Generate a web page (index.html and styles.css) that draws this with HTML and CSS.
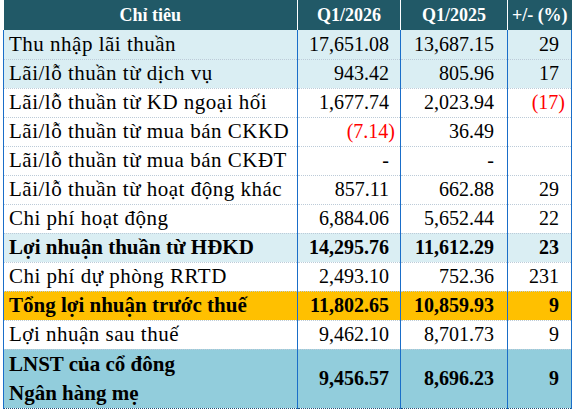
FILE: index.html
```html
<!DOCTYPE html>
<html lang="vi">

<head>
    <meta charset="UTF-8">
    <meta name="viewport" content="width=device-width, initial-scale=1.0">
    <title>Kết quả kinh doanh Q1/2026</title>
    <link rel="stylesheet" href="styles.css">
</head>

<body>
    <table class="kq">
        <thead>
            <tr>
                <th class="ten">Chỉ tiêu</th>
                <th>Q1/2026</th>
                <th>Q1/2025</th>
                <th class="pt">+/- (%)</th>
            </tr>
        </thead>
        <tbody>
            <tr class="xanh">
                <td>Thu nhập lãi thuần</td>
                <td>17,651.08</td>
                <td>13,687.15</td>
                <td>29</td>
            </tr>
            <tr class="xanh">
                <td>Lãi/lỗ thuần từ dịch vụ</td>
                <td>943.42</td>
                <td>805.96</td>
                <td>17</td>
            </tr>
            <tr>
                <td>Lãi/lỗ thuần từ KD ngoại hối</td>
                <td>1,677.74</td>
                <td>2,023.94</td>
                <td><span class="am">(17)</span></td>
            </tr>
            <tr>
                <td>Lãi/lỗ thuần từ mua bán CKKD</td>
                <td><span class="am">(7.14)</span></td>
                <td>36.49</td>
                <td></td>
            </tr>
            <tr>
                <td>Lãi/lỗ thuần từ mua bán CKĐT</td>
                <td class="gach">-</td>
                <td class="gach">-</td>
                <td></td>
            </tr>
            <tr>
                <td>Lãi/lỗ thuần từ hoạt động khác</td>
                <td>857.11</td>
                <td>662.88</td>
                <td>29</td>
            </tr>
            <tr>
                <td>Chi phí hoạt động</td>
                <td>6,884.06</td>
                <td>5,652.44</td>
                <td>22</td>
            </tr>
            <tr class="xanh dam">
                <td>Lợi nhuận thuần từ HĐKD</td>
                <td>14,295.76</td>
                <td>11,612.29</td>
                <td>23</td>
            </tr>
            <tr>
                <td>Chi phí dự phòng RRTD</td>
                <td>2,493.10</td>
                <td>752.36</td>
                <td>231</td>
            </tr>
            <tr class="cam dam">
                <td>Tổng lợi nhuận trước thuế</td>
                <td>11,802.65</td>
                <td>10,859.93</td>
                <td>9</td>
            </tr>
            <tr>
                <td>Lợi nhuận sau thuế</td>
                <td>9,462.10</td>
                <td>8,701.73</td>
                <td>9</td>
            </tr>
            <tr class="dam cuoi">
                <td>LNST của cổ đông<br>Ngân hàng mẹ</td>
                <td>9,456.57</td>
                <td>8,696.23</td>
                <td>9</td>
            </tr>
        </tbody>
    </table>
</body>

</html>
```
FILE: styles.css
```css
* {
    margin: 0;
    padding: 0;
    box-sizing: border-box;
}

body {
    background: #fff;
    padding: 0 2px 0 3px;
    font-family: "Liberation Serif", "Times New Roman", serif;
    color: #000;
}

.kq {
    border-collapse: collapse;
    width: 568px;
    table-layout: fixed;
}

.kq th {
    background: #215967;
    color: #fff;
    font-size: 18px;
    font-weight: bold;
    height: 30px;
    text-align: center;
    border-left: 1px solid #fff;
    padding-top: 1px;
}

.kq th.ten {
    width: 294px;
    border-left: none;
}

.kq th:nth-child(2) {
    width: 103px;
}

.kq th:nth-child(3) {
    width: 107px;
}

.kq th.pt {
    width: 64px;
}

.kq td {
    font-size: 20px;
    height: 29px;
    line-height: 27px;
    text-align: right;
    padding: 0 11px 0 0;
    border-left: 1px solid #1a6ec9;
    border-right: 1px solid #1a6ec9;
    border-bottom: 1px dotted #bccbd8;
    white-space: nowrap;
}

.kq td:first-child {
    font-size: 21px;
    letter-spacing: 0.5px;
    text-align: left;
    padding-left: 5px;
}

.kq td:nth-child(3) {
    padding-right: 13px;
}

.kq td:last-child {
    padding-right: 12px;
}

.xanh td {
    background: #daeef3;
}

.cam td {
    background: #ffc000;
}

.cuoi td {
    background: #92cddc;
    height: 58px;
    line-height: 29px;
    border-bottom: 1px dotted #1f4e79;
}

.dam td {
    font-weight: bold;
}

.dam td:first-child {
    letter-spacing: 0;
}

.am {
    color: #ff0000;
    margin-right: -6px;
}

.gach {
    font-size: 16px;
}
```
